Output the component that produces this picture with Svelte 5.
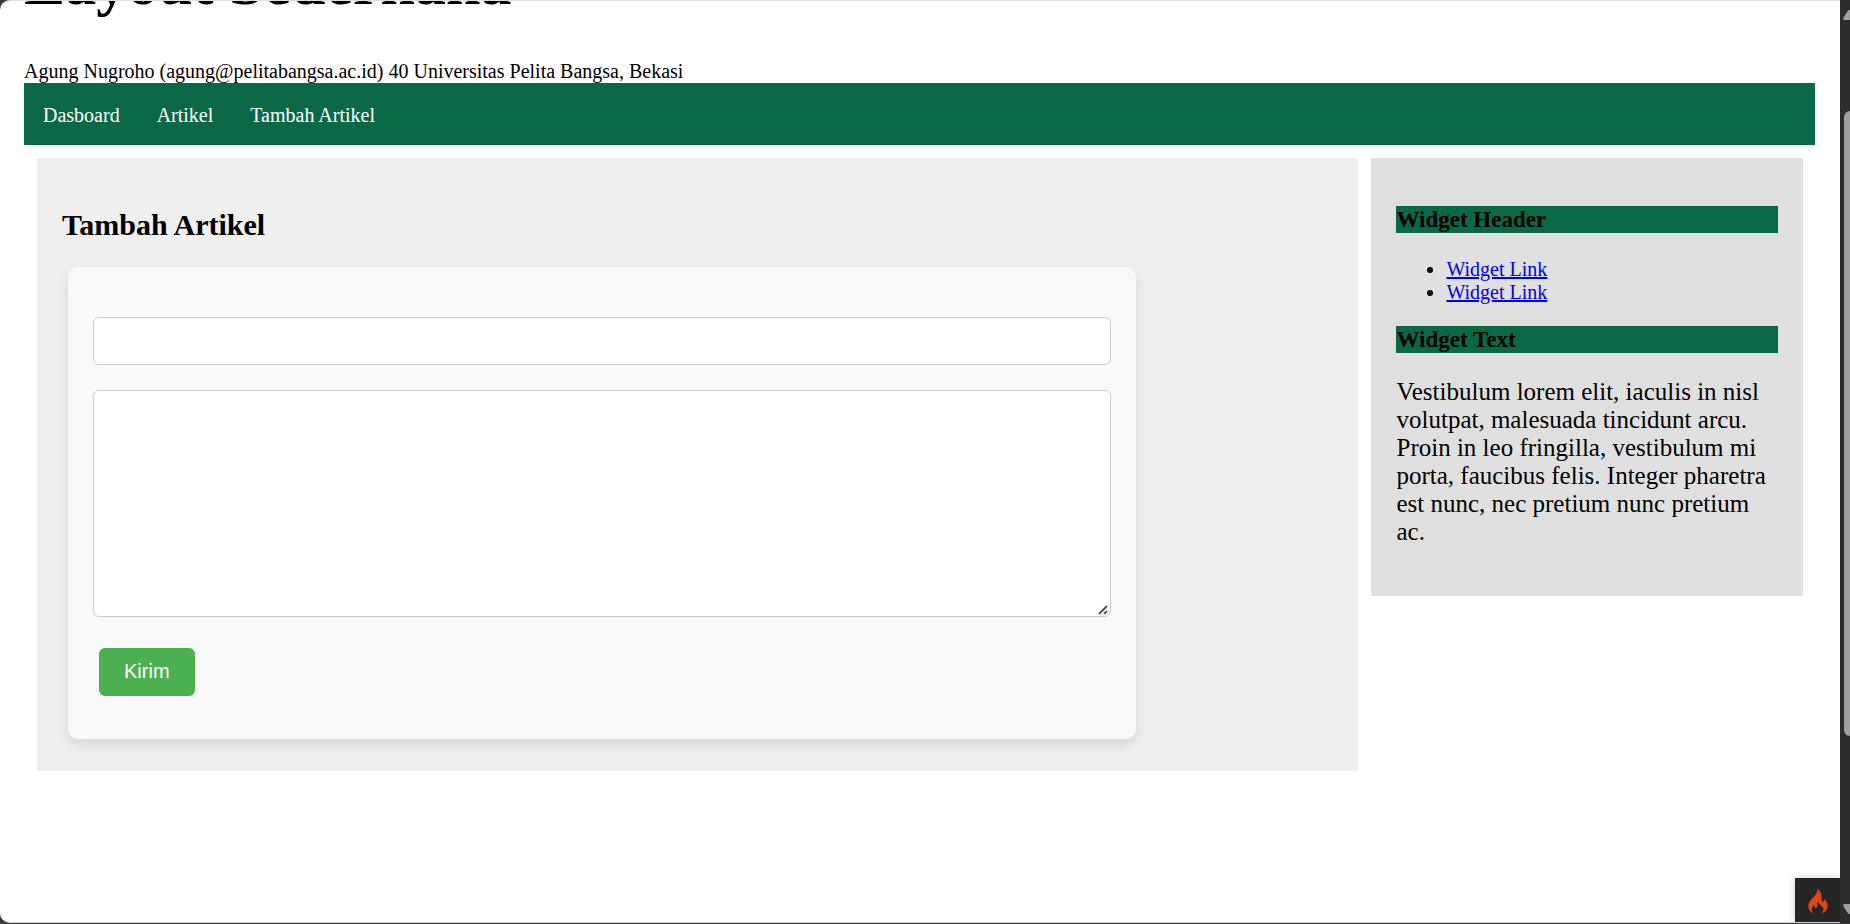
<script lang="ts">
  const menu = ['Dasboard', 'Artikel', 'Tambah Artikel'];
  const links = ['Widget Link', 'Widget Link'];
  let title = $state('');
  let body = $state('');
</script>

<div class="window">
  <div class="page">
    <header>
      <h1>Layout Sederhana</h1>
      <p>Agung Nugroho (agung@pelitabangsa.ac.id) 40 Universitas Pelita Bangsa, Bekasi</p>
    </header>
    <nav>
      {#each menu as item}
        <a href="#top">{item}</a>
      {/each}
    </nav>
    <div class="columns">
      <main>
        <h2>Tambah Artikel</h2>
        <form onsubmit={(e) => e.preventDefault()}>
          <input type="text" aria-label="Judul" bind:value={title} />
          <textarea aria-label="Isi" bind:value={body}></textarea>
          <button type="submit">Kirim</button>
        </form>
      </main>
      <aside>
        <h3>Widget Header</h3>
        <ul>
          {#each links as link}
            <li><a href="#top">{link}</a></li>
          {/each}
        </ul>
        <h3>Widget Text</h3>
        <p>
          Vestibulum lorem elit, iaculis in nisl volutpat, malesuada tincidunt arcu. Proin in leo
          fringilla, vestibulum mi porta, faucibus felis. Integer pharetra est nunc, nec pretium nunc
          pretium ac.
        </p>
      </aside>
    </div>
    <button class="debug" type="button" aria-label="Debug">
      <svg viewBox="0 0 20 26" width="20" height="26" aria-hidden="true">
        <path
          fill="#dd4814"
          d="M9.300 0.300C10 3.500 8.800 5.500 6.500 8C3.500 11.300 0.300 13.800 0.300 18.300C0.300 21.800 2.400 24.400 6.200 25.500C4.600 24.200 3.800 22.900 3.800 21.200C3.800 19.200 5 18 6 16.600C5.900 18.600 6.700 19.800 8 19.800C9.600 19.800 10 18.200 9.400 16.800C8.800 15.400 9 14.200 10.200 13.200C10.200 15.200 11.500 16 13 17.400C14.300 18.600 15.500 19.700 15.500 21.300C15.500 23.100 14.300 24.500 12.800 25.500C16.800 24.600 19.700 21.900 19.700 17.800C19.700 14.600 17.800 12.600 16 11C16.300 12.700 15.700 13.700 14.700 13.700C13.400 13.700 13.600 12 13.700 10C13.800 6 12.300 2.600 9.300 0.300Z"
        />
      </svg>
    </button>
  </div>
  <div class="scrollbar" aria-hidden="true">
    <svg viewBox="0 0 10 10" height="10"><path fill="#9f9f9f" d="M3 9Q3 8 7 2Q9 -1 10 0V10H4Z" /></svg>
    <div class="thumb"></div>
    <svg viewBox="0 0 10 10" height="10"><path fill="#9f9f9f" d="M3 1Q3 2 7 8Q9 11 10 10V0H4Z" /></svg>
  </div>
</div>

<style>
  :global(body) {
    background: #3b3b3b;
  }
  .window {
    display: flex;
    box-sizing: border-box;
    min-height: 100vh;
    padding-bottom: 1px;
    background: #3b3b3b;
    color: #000;
    font-family: 'Liberation Serif', serif;
    font-size: 20px;
    line-height: 23px;
  }
  .page {
    position: relative;
    flex: 1;
    box-sizing: border-box;
    padding: 0 25px 0 24px;
    overflow: hidden;
    background: #fff;
    border-top: 1px solid #e0e0e0;
    border-bottom: 1px solid #d0d0d0;
    border-radius: 10px 0 0 10px;
  }
  h1 {
    margin: -54px 0 41px;
    font-size: 62px;
    line-height: 72px;
  }
  header p {
    margin: 0;
  }
  nav {
    display: flex;
    gap: 37px;
    padding: 21px 19px 18px;
    background: #0a6847;
  }
  nav a {
    color: #fff;
    text-decoration: none;
  }
  .columns {
    display: grid;
    grid-template-columns: 49fr 16fr;
    align-items: start;
    gap: 13px;
    padding: 13px 12px 0 13px;
  }
  main {
    padding: 50px 25px 32px;
    background: #efefef;
  }
  h2 {
    margin: 0 0 25px;
    font-size: 30px;
    line-height: 34px;
  }
  form {
    box-sizing: border-box;
    width: 84%;
    margin-left: 6px;
    padding: 50px 25px 43px;
    background: #f9f9f9;
    border-radius: 10px;
    box-shadow: 0 5px 12px rgba(0, 0, 0, 0.1);
  }
  input,
  textarea {
    display: block;
    box-sizing: border-box;
    width: 100%;
    margin: 0 0 25px;
    padding: 12px;
    background: #fff;
    border: 1px solid #ccc;
    border-radius: 6px;
    font-family: 'Liberation Sans', sans-serif;
    font-size: 20px;
  }
  input {
    height: 48px;
  }
  textarea {
    height: 227px;
    resize: vertical;
  }
  textarea::-webkit-resizer {
    background: url("data:image/svg+xml,%3Csvg xmlns='http://www.w3.org/2000/svg' width='15' height='15'%3E%3Cpath d='M4 13L12 5M9 13L12 10' stroke='%23555' stroke-width='2'/%3E%3C/svg%3E")
      no-repeat;
  }
  form button {
    display: block;
    height: 48px;
    margin: 31px 0 0 6px;
    padding: 0 25px 2px;
    background: #4caf50;
    border: 0;
    border-radius: 6px;
    color: #fff;
    font-family: 'Liberation Sans', sans-serif;
    font-size: 20px;
  }
  aside {
    padding: 48px 25px 50px;
    background: #e0e0e0;
  }
  h3 {
    margin: 0 0 25px;
    background: #0a6847;
    font-size: 23px;
    line-height: 27px;
  }
  ul {
    margin: 0 0 22px;
    padding-left: 50px;
  }
  ul a {
    color: #00e;
  }
  aside p {
    margin: 0;
    font-size: 25px;
    line-height: 28px;
  }
  .debug {
    position: absolute;
    right: 0;
    bottom: 0;
    display: grid;
    place-items: center;
    width: 45px;
    height: 44px;
    padding: 2px 0 0;
    background: #252525;
    border: 0;
    box-shadow: 0 0 8px rgba(0, 0, 0, 0.2);
  }
  .scrollbar {
    display: flex;
    flex-direction: column;
    box-sizing: border-box;
    width: 10px;
    padding: 10px 0 9px;
    overflow: hidden;
    background: #2c2c2c;
  }
  .thumb {
    flex: 1;
    margin: 91px 0 168px 4px;
    background: #9f9f9f;
    border-radius: 6px 0 0 6px;
  }
</style>
